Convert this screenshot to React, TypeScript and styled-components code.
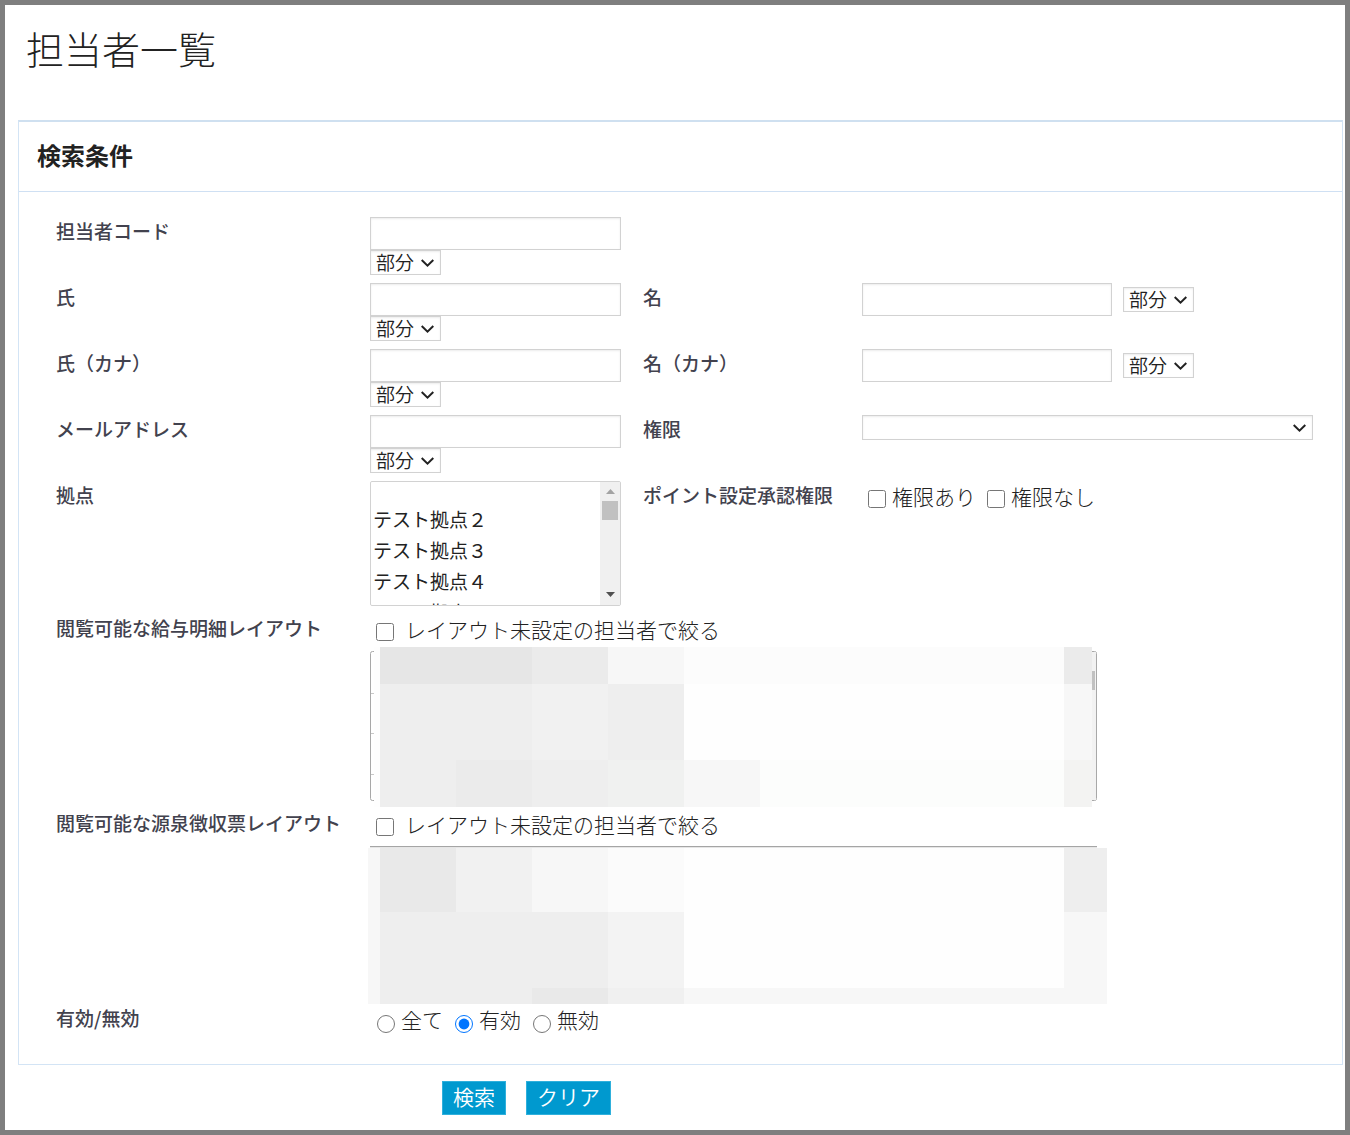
import React, { useId } from "react";
import styled, { createGlobalStyle, css } from "styled-components";

const GlobalStyle = createGlobalStyle`
  *, *::before, *::after { box-sizing: border-box; }
  body {
    margin: 0;
    background: #fff;
    color: #222;
    font-family: "Noto Sans CJK JP", "Noto Sans", sans-serif;
    font-size: 21px;
    font-weight: 300;
  }
  input, select, button { margin: 0; font: inherit; color: inherit; }
`;

const Frame = styled.div`
  min-height: 100vh;
  padding: 0 2px 15px 13px;
  border: 5px solid #7f7f7f;
`;

const PageTitle = styled.h1`
  margin: 0;
  padding: 18px 8px 47px;
  font-size: 38px;
  font-weight: 200;
  line-height: 50px;
`;

const Panel = styled.section`
  border: 1px solid #d3e4f5;
  border-top: 2px solid #cfe0f0;
`;

const PanelTitle = styled.h2`
  margin: 0;
  padding: 13px 18px 16px;
  border-bottom: 1px solid #cfe0f3;
  font-size: 24px;
  font-weight: 700;
  line-height: 40px;
`;

const Form = styled.div`
  display: grid;
  row-gap: 8px;
  padding: 25px 29px 30px 37px;
`;

const Row = styled.div`
  display: grid;
  grid-template-columns: 314fr 273fr 219fr 451fr;
  align-items: start;
`;

const labelText = css`
  color: #42424e;
  font-size: 19px;
  font-weight: 500;
  line-height: 28px;
`;

const Label = styled.label`
  ${labelText}
`;

const GroupLabel = styled.span`
  ${labelText}
`;

const Stacked = styled.div`
  display: flex;
  flex-direction: column;
  align-items: flex-start;
  padding-right: 22px;
`;

const Inline = styled.div`
  display: flex;
  align-items: center;
  gap: 11px;
`;

const TextInput = styled.input<{ $fill?: boolean }>`
  width: ${(p) => (p.$fill ? "100%" : "250px")};
  height: 33px;
  padding: 0 6px;
  border: 1px solid #d2d2d2;
  background: #fff;
  box-shadow: inset 0 1px 2px #ececec;
`;

const SelectBox = styled.div<{ $fill?: boolean }>`
  position: relative;
  flex: none;
  width: ${(p) => (p.$fill ? "100%" : "71px")};
  height: 25px;

  svg {
    position: absolute;
    top: 9px;
    right: 7px;
    pointer-events: none;
  }
`;

const NativeSelect = styled.select`
  display: block;
  width: 100%;
  height: 100%;
  padding: 0 20px 2px 5px;
  border: 1px solid #d2d2d2;
  border-radius: 0;
  background: #fff;
  box-shadow: inset 0 1px 2px #ececec;
  appearance: none;
  font-size: 19px;
  font-weight: 350;
  line-height: 21px;
`;

const ListBox = styled.div`
  display: flex;
  width: 100%;
  height: 125px;
  overflow: hidden;
  border: 1px solid #d2d2d2;
  border-radius: 2px;
`;

const ListSelect = styled.select`
  flex: 1;
  min-width: 0;
  height: 100%;
  padding: 0;
  border: 0;
  outline: 0;
  overflow-y: auto;
  scrollbar-width: none;
  background: #fff;
  font-size: 19px;
  font-weight: 350;
`;

const ListOption = styled.option<{ $blank?: boolean }>`
  height: ${(p) => (p.$blank ? "23px" : "31px")};
  min-height: 0;
  padding: 0 2px;
  line-height: 31px;
`;

const ScrollTrack = styled.div`
  display: flex;
  flex-direction: column;
  align-items: center;
  width: 20px;
  padding: 7px 0 8px;
  background: #f0f0f0;
`;

const ScrollThumb = styled.div`
  width: 16px;
  height: 19px;
  margin: 7px 0 auto;
  background: #c1c1c1;
`;

const Choices = styled.div<{ $wide?: boolean }>`
  display: flex;
  gap: 11px;
  padding-left: 6px;
  line-height: 30px;
  ${(p) =>
    p.$wide &&
    css`
      grid-column: span 3;
      gap: 12px;
      padding-left: 7px;
    `}
`;

const Choice = styled.label<{ $gap?: number }>`
  display: flex;
  align-items: center;
  gap: ${(p) => p.$gap ?? 6}px;
  white-space: nowrap;
`;

const Check = styled.input`
  width: 18px;
  height: 18px;
  margin-top: 5px;
`;

const Radio = styled.input`
  width: 18px;
  height: 18px;
  margin-top: 10px;
  accent-color: #0075ff;
`;

const LayoutField = styled.div`
  grid-column: span 3;
`;

const LayoutCheck = styled.div`
  padding: 0 0 7px 6px;
  line-height: 30px;
`;

const MaskedList = styled.div`
  width: 727px;
  max-width: 100%;
  height: 150px;

  svg {
    display: block;
    width: 100%;
    height: 100%;
    overflow: visible;
  }
`;

const Actions = styled.div`
  display: flex;
  gap: 20px;
  padding: 16px 0 0 32%;
`;

const ActionButton = styled.button`
  height: 34px;
  padding: 0 10px 4px;
  border: 1px solid #2fb0dc;
  background: #0099cf;
  color: #fff;
  font-weight: 350;
  line-height: 28px;
`;

const Chevron = () => (
  <svg width="13" height="8" viewBox="0 0 13 8" fill="none" stroke="#222" strokeWidth="2" aria-hidden="true">
    <path d="M0.7 1 L6.5 6.6 L12.3 1" />
  </svg>
);

function MatchSelect({ name }: { name: string }) {
  return (
    <SelectBox>
      <NativeSelect aria-label={name}>
        <option>部分</option>
      </NativeSelect>
      <Chevron />
    </SelectBox>
  );
}

function MatchField({ label, inline }: { label: string; inline?: boolean }) {
  const id = useId();
  const Wrap = inline ? Inline : Stacked;
  return (
    <>
      <Label htmlFor={id}>{label}</Label>
      <Wrap>
        <TextInput id={id} type="text" $fill={!inline} />
        <MatchSelect name={label} />
      </Wrap>
    </>
  );
}

type Tile = [x: number, y: number, w: number, h: number, fill: string];

const slipTiles: Tile[] = [
  [4, -4, 718, 160, "#fefefe"],
  [10, -4, 152, 37, "#e6e6e6"],
  [162, -4, 76, 37, "#ebebeb"],
  [238, -4, 76, 37, "#f7f7f7"],
  [314, -4, 380, 37, "#fcfcfc"],
  [694, -4, 28, 37, "#ebebeb"],
  [10, 33, 152, 76, "#eeeeee"],
  [162, 33, 76, 76, "#f1f1f1"],
  [238, 33, 76, 76, "#eeeeee"],
  [694, 33, 28, 76, "#f7f7f7"],
  [10, 109, 76, 47, "#eeeeee"],
  [86, 109, 76, 47, "#ebebeb"],
  [162, 109, 76, 47, "#eeeeee"],
  [238, 109, 76, 47, "#f0f1f0"],
  [314, 109, 76, 47, "#f7f7f7"],
  [390, 109, 304, 47, "#fcfdfc"],
  [694, 109, 28, 47, "#f3f3f2"],
];

const taxTiles: Tile[] = [
  [-2, 2, 739, 156, "#f7f7f7"],
  [10, 2, 76, 64, "#e9e9e9"],
  [86, 2, 76, 64, "#f1f1f1"],
  [238, 2, 76, 64, "#fbfbfb"],
  [314, 2, 380, 140, "#fefefe"],
  [694, 2, 43, 64, "#eeeeee"],
  [10, 66, 228, 92, "#eeeeee"],
  [238, 66, 76, 76, "#f3f3f3"],
  [162, 142, 76, 16, "#e9e9e9"],
  [238, 142, 76, 16, "#f0f0f0"],
];

const Tiles = ({ tiles }: { tiles: Tile[] }) => (
  <g shapeRendering="crispEdges">
    {tiles.map(([x, y, w, h, fill], i) => (
      <rect key={i} x={x} y={y} width={w} height={h} fill={fill} />
    ))}
  </g>
);

const SlipMask = () => (
  <svg viewBox="0 0 727 150" preserveAspectRatio="none" aria-hidden="true">
    <rect x="0.5" y="0.5" width="726" height="149" rx="2" fill="#fff" stroke="#a8a8a8" />
    <path d="M1 42.5H4M1 82.5H4M1 123.5H4" stroke="#c8c8c8" />
    <rect x="720" y="1" width="6" height="148" fill="#f2f2f2" />
    <rect x="720" y="20" width="5" height="19" fill="#c1c1c1" />
    <Tiles tiles={slipTiles} />
  </svg>
);

const TaxMask = () => (
  <svg viewBox="0 0 727 150" preserveAspectRatio="none" aria-hidden="true">
    <path d="M0 0.5H727" stroke="#a5a5a5" />
    <path d="M0 1.5H727" stroke="#e6e6e6" />
    <Tiles tiles={taxTiles} />
  </svg>
);

function LayoutRow({ label, children }: { label: string; children: React.ReactNode }) {
  return (
    <Row role="group" aria-label={label}>
      <GroupLabel>{label}</GroupLabel>
      <LayoutField>
        <LayoutCheck>
          <Choice $gap={11}>
            <Check type="checkbox" />
            レイアウト未設定の担当者で絞る
          </Choice>
        </LayoutCheck>
        <MaskedList>{children}</MaskedList>
      </LayoutField>
    </Row>
  );
}

export default function App() {
  return (
    <Frame>
      <GlobalStyle />
      <PageTitle>担当者一覧</PageTitle>
      <Panel>
        <PanelTitle>検索条件</PanelTitle>
        <Form>
          <Row>
            <MatchField label="担当者コード" />
          </Row>
          <Row>
            <MatchField label="氏" />
            <MatchField label="名" inline />
          </Row>
          <Row>
            <MatchField label="氏（カナ）" />
            <MatchField label="名（カナ）" inline />
          </Row>
          <Row>
            <MatchField label="メールアドレス" />
            <Label htmlFor="role">権限</Label>
            <SelectBox $fill>
              <NativeSelect id="role">
                <option></option>
              </NativeSelect>
              <Chevron />
            </SelectBox>
          </Row>
          <Row>
            <Label htmlFor="base">拠点</Label>
            <Stacked>
              <ListBox>
                <ListSelect id="base" multiple>
                  <ListOption $blank></ListOption>
                  <ListOption>テスト拠点２</ListOption>
                  <ListOption>テスト拠点３</ListOption>
                  <ListOption>テスト拠点４</ListOption>
                  <ListOption>テスト拠点５</ListOption>
                </ListSelect>
                <ScrollTrack aria-hidden="true">
                  <svg width="9" height="5" viewBox="0 0 9 5">
                    <path d="M4.5 0L9 5H0Z" fill="#a3a3a3" />
                  </svg>
                  <ScrollThumb />
                  <svg width="9" height="5" viewBox="0 0 9 5">
                    <path d="M0 0H9L4.5 5Z" fill="#505050" />
                  </svg>
                </ScrollTrack>
              </ListBox>
            </Stacked>
            <GroupLabel>ポイント設定承認権限</GroupLabel>
            <Choices role="group" aria-label="ポイント設定承認権限">
              <Choice>
                <Check type="checkbox" />
                権限あり
              </Choice>
              <Choice>
                <Check type="checkbox" />
                権限なし
              </Choice>
            </Choices>
          </Row>
          <LayoutRow label="閲覧可能な給与明細レイアウト">
            <SlipMask />
          </LayoutRow>
          <LayoutRow label="閲覧可能な源泉徴収票レイアウト">
            <TaxMask />
          </LayoutRow>
          <Row>
            <GroupLabel>有効/無効</GroupLabel>
            <Choices $wide role="radiogroup" aria-label="有効/無効">
              <Choice>
                <Radio type="radio" name="state" />
                全て
              </Choice>
              <Choice>
                <Radio type="radio" name="state" defaultChecked />
                有効
              </Choice>
              <Choice>
                <Radio type="radio" name="state" />
                無効
              </Choice>
            </Choices>
          </Row>
        </Form>
      </Panel>
      <Actions>
        <ActionButton type="button">検索</ActionButton>
        <ActionButton type="button">クリア</ActionButton>
      </Actions>
    </Frame>
  );
}
